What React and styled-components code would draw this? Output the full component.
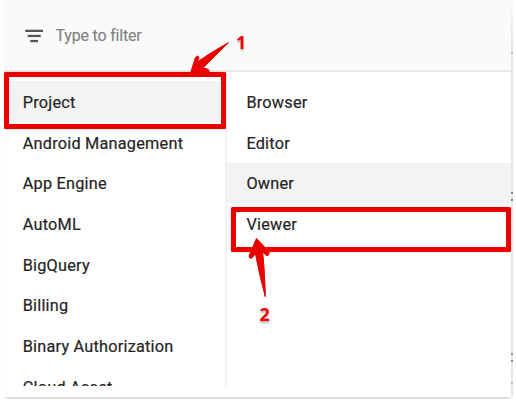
import React from 'react';
import styled, { createGlobalStyle } from 'styled-components';

const GlobalStyle = createGlobalStyle`
  * { box-sizing: border-box; }
  html, body { margin: 0; background: #fff; overflow: hidden; }
  body { font-family: Roboto, sans-serif; color: #252525; }
`;

const Page = styled.main`
  position: relative;
  width: 516px;
  height: 400px;
  padding-left: 4px;
  display: flex;
  align-items: flex-start;
  overflow: hidden;
`;

const Panel = styled.section`
  width: 507px;
  flex: none;
  height: 396.5px;
  background: #fff;
  box-shadow: 0 1.5px 1px #dedede;
  display: flex;
  flex-direction: column;
`;

const Filter = styled.header`
  height: 71.5px;
  flex: none;
  display: flex;
  align-items: center;
  gap: 12.5px;
  padding: 2.5px 0 0 21px;
  background: #fafafa;
  border-bottom: 2px solid #e8e8e8;
`;

const Hint = styled.span`
  font-size: 16px;
  line-height: 20px;
  color: #828282;
  letter-spacing: -0.19px;
  -webkit-text-stroke: 0.15px #828282;
`;

const Columns = styled.div`
  height: 314.5px;
  flex: none;
  display: grid;
  grid-template-columns: 222.5px 1fr;
  overflow: hidden;
`;

const List = styled.ul`
  display: flex;
  flex-direction: column;
  list-style: none;
  margin: 0;
  padding: 9.8px 0 0;
  border-right: ${(p) => (p.$divided ? '2px solid #f1f1f1' : '0')};
`;

const Item = styled.li`
  height: 40.7px;
  flex: none;
  padding: 2.4px 0 0 ${(p) => p.$inset};
  display: flex;
  align-items: center;
  font-size: 16.3px;
  line-height: 22px;
  letter-spacing: 0.22px;
  -webkit-text-stroke: 0.2px #252525;
  white-space: nowrap;
  background: ${(p) => (p.$active ? '#f3f3f3' : 'transparent')};
`;

const Edge = styled.div`
  width: 2px;
  height: 397px;
  display: flex;
  flex-direction: column;
  background: linear-gradient(#f7f7f7, #e7e7e7 40px);
`;

const Specks = styled.div`
  display: flex;
  flex-direction: column;
  gap: 5px;
  flex: none;
  padding-top: ${(p) => p.$gap};
`;

const Speck = styled.i`
  height: 2px;
  background: ${(p) => (p.$faint ? '#b8b8b8' : '#858585')};
`;

const Highlight = styled.div`
  position: absolute;
  left: ${(p) => p.$x}px;
  top: ${(p) => p.$y}px;
  width: ${(p) => p.$w}px;
  height: ${(p) => p.$h}px;
  border: 5px solid #e90000;
  border-radius: 1.5px;
  box-shadow: 0 0 1px #ef5555;
`;

const Arrows = styled.svg`
  position: absolute;
  inset: 0;
  filter: drop-shadow(0 0.5px 0.4px #d66);
`;

const Step = styled.span`
  position: absolute;
  left: ${(p) => p.$x}px;
  top: ${(p) => p.$y}px;
  font: 700 18px/22px 'Open Sans', sans-serif;
  color: #f00505;
  text-shadow: 0 2px 1.5px #bbb;
`;

const services = ['Project', 'Android Management', 'App Engine', 'AutoML', 'BigQuery', 'Billing', 'Binary Authorization', 'Cloud Asset'];
const roles = ['Browser', 'Editor', 'Owner', 'Viewer'];

export default function App() {
  return (
    <>
      <GlobalStyle />
      <Page>
        <Panel>
          <Filter>
            <svg width="18" height="14" viewBox="0 0 18 14" fill="#555">
              <rect x="0.3" y="0.7" width="17.7" height="2.3" />
              <rect x="2.7" y="5.8" width="13" height="2.3" />
              <rect x="5.3" y="10.9" width="7.7" height="2.3" />
            </svg>
            <Hint>Type to filter</Hint>
          </Filter>
          <Columns>
            <List $divided>
              {services.map((name) => <Item key={name} $inset="18.7px" $active={name === 'Project'}>{name}</Item>)}
            </List>
            <List>
              {roles.map((name) => <Item key={name} $inset="19.9px" $active={name === 'Owner'}>{name}</Item>)}
            </List>
          </Columns>
        </Panel>
        <Edge>
          <Specks $gap="52px"><Speck $faint /></Specks>
          <Specks $gap="138px"><Speck /><Speck /></Specks>
          <Specks $gap="152px"><Speck /><Speck /></Specks>
          <Specks $gap="20px"><Speck $faint /></Specks>
        </Edge>
        <Highlight $x={3.5} $y={72} $w={222} $h={56.5} />
        <Highlight $x={230.5} $y={206.5} $w={280.5} $h={45.5} />
        <Arrows width="516" height="400" viewBox="0 0 516 400" fill="#e90000" stroke="#e90000" strokeWidth="1" strokeLinejoin="round">
          <path d="M228.3 42.8 Q213 58 202.5 68.3 L207.5 69 Q210.5 71 208 72.8 L190 75.2 L195.5 57.5 Q197.5 54.8 199 57.5 L197.5 62 Q210 53 228.3 42.8 Z" />
          <path d="M265.3 296.5 Q264.5 270 262.5 251.8 L266.8 255.8 Q270 255 268.5 251.5 L256.5 238.5 L249.2 256 Q249.5 259.5 252.3 257.5 L255.5 253.5 Q259.5 275 265.3 296.5 Z" />
        </Arrows>
        <Step $x={236} $y={30.5}>1</Step>
        <Step $x={259.5} $y={302.5}>2</Step>
      </Page>
    </>
  );
}
